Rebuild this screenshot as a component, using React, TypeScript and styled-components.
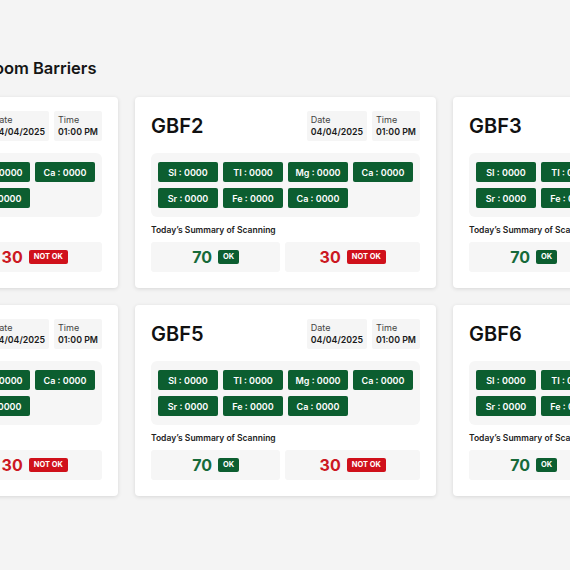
import React from 'react';
import styled, { createGlobalStyle } from 'styled-components';

const GlobalStyle = createGlobalStyle`
  * { box-sizing: border-box; }
  body {
    margin: 0;
    background: #f4f4f4;
    font-family: Inter, 'Noto Sans', 'Liberation Sans', sans-serif;
    color: #111;
  }
`;

interface IBarrier {
  id: string;
  date: string;
  time: string;
  ok: number;
  notOk: number;
}

const barriers: IBarrier[] = [1, 2, 3, 4, 5, 6].map((n) => ({
  id: `GBF${n}`,
  date: '04/04/2025',
  time: '01:00 PM',
  ok: 70,
  notOk: 30,
}));

const elements = ['SI', 'TI', 'Mg', 'Ca', 'Sr', 'Fe', 'Ca'];

const BarrierCard = ({ item }: { item: IBarrier }) => (
  <Card>
    <CardHeader>
      <CardTitle>{item.id}</CardTitle>
      <MetaGroup>
        <MetaBox>
          <MetaLabel>Date</MetaLabel>
          <MetaValue>{item.date}</MetaValue>
        </MetaBox>
        <MetaBox>
          <MetaLabel>Time</MetaLabel>
          <MetaValue>{item.time}</MetaValue>
        </MetaBox>
      </MetaGroup>
    </CardHeader>
    <ChipPanel>
      {elements.map((el, i) => (
        <Chip key={i}>{el} : 0000</Chip>
      ))}
    </ChipPanel>
    <SummaryLabel>Today’s Summary of Scanning</SummaryLabel>
    <SummaryRow>
      <SummaryBox>
        <Count $ok>{item.ok}</Count>
        <Badge $ok>OK</Badge>
      </SummaryBox>
      <SummaryBox>
        <Count>{item.notOk}</Count>
        <Badge>NOT OK</Badge>
      </SummaryBox>
    </SummaryRow>
  </Card>
);

export default function App() {
  return (
    <Page>
      <GlobalStyle />
      <Section>
        <PageTitle>Boom Barriers</PageTitle>
        <Grid>
          {barriers.map((b) => (
            <BarrierCard key={b.id} item={b} />
          ))}
        </Grid>
      </Section>
    </Page>
  );
}

const Page = styled.div`
  width: 570px;
  height: 570px;
  overflow: hidden;
  background: #f4f4f4;
  padding-top: 57px;
`;

const Section = styled.div`
  display: flex;
  flex-direction: column;
  row-gap: 18px;
  margin-left: -183px;
  width: max-content;
`;

const PageTitle = styled.h1`
  all: unset;
  display: block;
  padding-left: 166px;
  font-size: 16.5px;
  line-height: 22px;
  font-weight: 600;
  color: #151515;
`;

const Grid = styled.div`
  display: grid;
  grid-template-columns: repeat(3, 301px);
  gap: 17px;
`;

const Card = styled.div`
  background: #fff;
  border-radius: 4px;
  box-shadow: 0 1px 4px rgba(0, 0, 0, 0.12);
  padding: 14px 16px 16px;
  display: flex;
  flex-direction: column;
`;

const CardHeader = styled.div`
  display: flex;
  justify-content: space-between;
  align-items: center;
`;

const CardTitle = styled.h2`
  all: unset;
  font-size: 20px;
  font-weight: 600;
  color: #111;
  line-height: 1;
`;

const MetaGroup = styled.div`
  display: flex;
  column-gap: 5px;
`;

const MetaBox = styled.div`
  background: #f5f5f5;
  border-radius: 2px;
  padding: 4px 4px;
  height: 30px;
  display: flex;
  flex-direction: column;
  justify-content: center;
  row-gap: 1px;
`;

const MetaLabel = styled.span`
  font-size: 9px;
  line-height: 11px;
  color: #444;
`;

const MetaValue = styled.span`
  font-size: 8.8px;
  line-height: 12px;
  font-weight: 600;
  color: #1a1a1a;
  white-space: nowrap;
`;

const ChipPanel = styled.div`
  margin-top: 12px;
  background: #f6f6f6;
  border-radius: 6px;
  padding: 9px 7px;
  display: grid;
  grid-template-columns: repeat(4, 60px);
  gap: 6px 5px;
`;

const Chip = styled.div`
  height: 20px;
  background: #0c5e30;
  border-radius: 2px;
  color: #fff;
  font-size: 9px;
  font-weight: 600;
  display: flex;
  align-items: center;
  justify-content: center;
  white-space: nowrap;
`;

const SummaryLabel = styled.p`
  all: unset;
  display: block;
  margin-top: 8px;
  font-size: 8.5px;
  line-height: 11px;
  font-weight: 600;
  color: #222;
`;

const SummaryRow = styled.div`
  margin-top: 6px;
  display: grid;
  grid-template-columns: 129fr 134fr;
  column-gap: 5px;
`;

const SummaryBox = styled.div`
  height: 30px;
  background: #f6f6f6;
  border-radius: 3px;
  display: flex;
  align-items: center;
  justify-content: center;
  column-gap: 6px;
`;

const Count = styled.span<{ $ok?: boolean }>`
  font-size: 16px;
  font-weight: 700;
  color: ${({ $ok }) => ($ok ? '#166a3a' : '#cc1822')};
`;

const Badge = styled.span<{ $ok?: boolean }>`
  background: ${({ $ok }) => ($ok ? '#0c5e30' : '#d0111b')};
  color: #fff;
  font-size: 7.5px;
  font-weight: 700;
  line-height: 1;
  padding: 3px 5px;
  border-radius: 2px;
`;
